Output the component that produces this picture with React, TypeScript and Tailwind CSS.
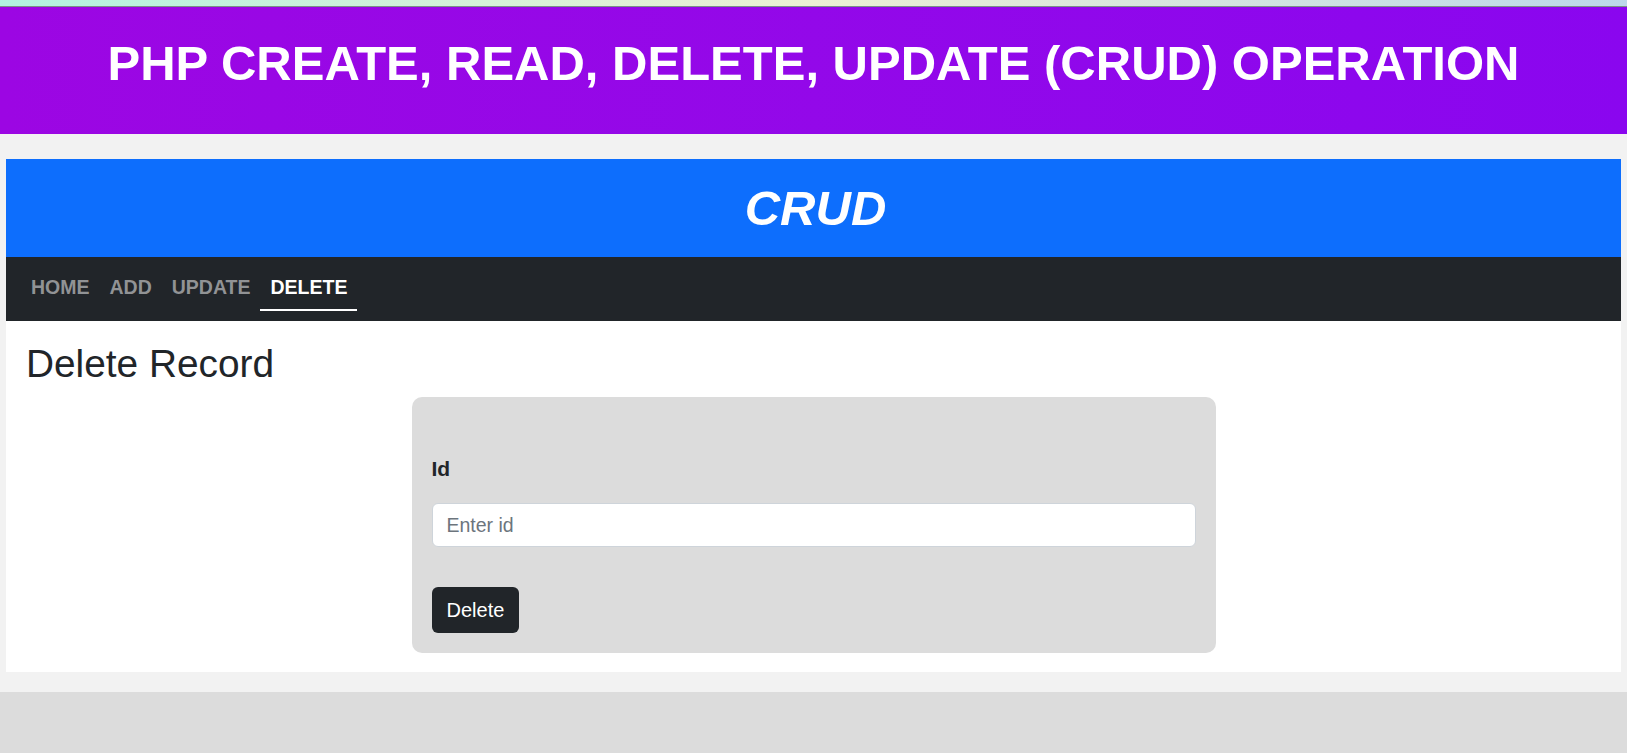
import React from 'react';

const links = ['HOME', 'ADD', 'UPDATE', 'DELETE'];

export default function App() {
  return (
    <div className="min-h-screen bg-[#dcdcdc] font-['Liberation_Sans',Arial,sans-serif]">
      <div className="h-[7px] bg-linear-to-r from-[#b2f2e0] via-[#ecf0d4] to-[#bcd8ea] border-b border-[#7a9088]" />

      <header className="h-[127px] bg-linear-to-r from-[#9c06e3] to-[#8a06ef] pt-[27px] text-center">
        <h1 className="text-[49px] leading-[59px] font-bold text-white">
          PHP CREATE, READ, DELETE, UPDATE (CRUD) OPERATION
        </h1>
      </header>

      <div className="bg-[#f2f2f2] px-[6px] pt-[25px] pb-[20px]">
        <div className="h-[98px] bg-[#0d6efd] flex items-center justify-center pl-[4px]">
          <h2 className="text-[49px] leading-[58px] italic font-bold text-white">CRUD</h2>
        </div>

        <nav className="h-[64px] bg-[#212529] pl-[15px] pt-[10px] flex items-start">
          {links.map((l) => (
            <a
              key={l}
              href="#"
              className={`px-[10px] h-[44px] flex items-center text-[19.5px] font-bold ${
                l === 'DELETE' ? 'text-white border-b-2 border-white' : 'text-[#919395] border-b-2 border-transparent'
              }`}
            >
              {l}
            </a>
          ))}
        </nav>

        <section className="bg-white px-[18px] pt-[19px] pb-[19px]">
          <h3 className="pl-[2px] text-[38.8px] leading-[48px] text-[#212529] mb-[9px]">Delete Record</h3>

          <form className="mx-auto w-[804px] rounded-[10px] bg-[#dcdcdc] px-[20px] pt-[56px] pb-[20px]">
            <label className="block text-[21px] font-bold leading-[32px] text-[#212529] mb-[18px]">Id</label>
            <input
              type="text"
              placeholder="Enter id"
              className="block w-full h-[44px] rounded-[6px] border border-[#ced4da] bg-white px-[14px] text-[19.5px] text-[#212529] placeholder:text-[#6c757d] outline-none"
            />
            <button
              type="button"
              className="mt-[40px] h-[46px] px-[15px] rounded-[6px] bg-[#212529] text-white text-[20px]"
            >
              Delete
            </button>
          </form>
        </section>
      </div>
    </div>
  );
}
